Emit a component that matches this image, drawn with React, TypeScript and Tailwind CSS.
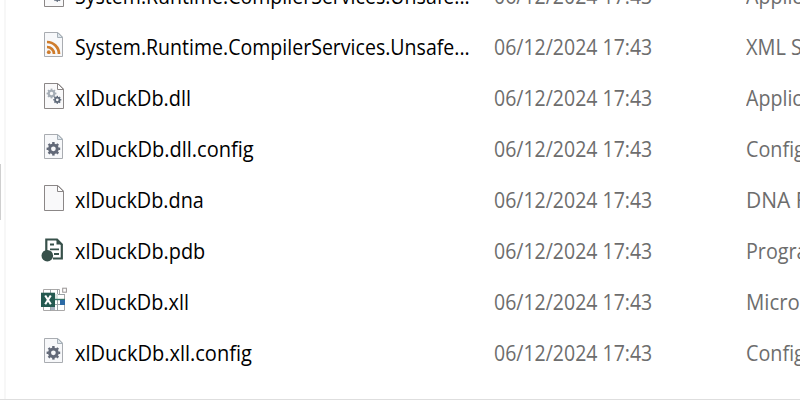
import type { ReactNode } from "react";

type Kind = "dll" | "rss" | "config" | "blank" | "pdb" | "xll";

function Gear({ cx, cy, r, color }: { cx: number; cy: number; r: number; color: string }) {
  return (
    <g transform={`translate(${cx} ${cy})`} stroke={color} fill="none">
      <circle r={r * 0.57} strokeWidth={r * 0.44} />
      {[0, 45, 90, 135, 180, 225, 270, 315].map((a) => (
        <path key={a} d={`M0 ${-r * 0.7}V${-r}`} strokeWidth={r * 0.36} transform={`rotate(${a})`} />
      ))}
    </g>
  );
}

function SmallPage() {
  return (
    <>
      <path d="M4.5 1.5H18L22.5 6V25.5H4.5Z" fill="#f7f8fa" stroke="#a9acb1" />
      <path d="M17.5 1.5V6.5H22.5Z" fill="#dfe6ec" stroke="#a6b0b8" />
    </>
  );
}

function LargePage() {
  return (
    <>
      <path d="M4.5 1.5H18L23.5 7V26.5H4.5Z" fill="#f9f9fa" stroke="#8b8787" />
      <path d="M17.5 1.5V7.5H23.5Z" fill="#ffffff" stroke="#8b8787" />
    </>
  );
}

const art: Record<Kind, ReactNode> = {
  dll: (
    <>
      <LargePage />
      <Gear cx={11.5} cy={11.5} r={4.9} color="#a5adb6" />
      <Gear cx={17.3} cy={17.8} r={4} color="#5e6979" />
    </>
  ),
  rss: (
    <>
      <SmallPage />
      <g fill="none" stroke="#cf7c2c" strokeWidth="2.7">
        <path d="M7 11A12 12 0 0 1 19 23" />
        <path d="M7 16A7 7 0 0 1 14 23" />
      </g>
      <circle cx="8.8" cy="21.2" r="1.9" fill="#cf7c2c" />
    </>
  ),
  config: (
    <>
      <SmallPage />
      <Gear cx={13.4} cy={15.8} r={6.8} color="#626978" />
    </>
  ),
  blank: <LargePage />,
  pdb: (
    <>
      <path d="M6.3 16V4.5H17L21.8 9.5V23.5H13" fill="none" stroke="#37504a" strokeWidth="2.2" />
      <path d="M16.5 4V9.5H22.5Z" fill="#37504a" />
      <path d="M10 9.5H14M10 14.3H19M14 19H19" stroke="#37504a" strokeWidth="1.8" />
      <circle cx="7.3" cy="20.7" r="5.8" fill="#37504a" />
    </>
  ),
  xll: (
    <>
      <path d="M3.5 3.5H19.5V8.5H24.5V24.5H3.5Z" fill="#fff" stroke="#aaa8a8" />
      <path d="M10.5 3V8M17.5 3V25M10.5 20V25M15 8.5H25M15 13.5H25M15 18.5H25" stroke="#9ba3a7" fill="none" />
      <path d="M14 8H18V14H14Z" fill="#dce5e2" />
      <path d="M15 13.5H25" stroke="#347568" strokeWidth="1.4" />
      <path d="M20 14H25V19H20Z" fill="#2c6aa5" />
      <path d="M11 21H15V24H11Z" fill="#a9b3c1" />
      <rect x="1" y="6.7" width="14" height="14.3" fill="#245950" />
      <path d="M5.2 9.5L10.8 18.2M10.8 9.5L5.2 18.2" stroke="#fff" strokeWidth="2.1" />
      <rect x="22.7" y="2.2" width="3.7" height="4" fill="#fff" stroke="#999595" />
    </>
  ),
};

interface Row {
  kind: Kind;
  name: string;
  nameFit: string;
  type: string;
  typeFit: string;
}

const rows: Row[] = [
  { kind: "dll", name: "System.Runtime.CompilerServices.Unsafe...", nameFit: "scale-x-[0.931]", type: "Application extension", typeFit: "scale-x-[0.935]" },
  { kind: "rss", name: "System.Runtime.CompilerServices.Unsafe...", nameFit: "scale-x-[0.931]", type: "XML Source File", typeFit: "scale-x-[0.95]" },
  { kind: "dll", name: "xlDuckDb.dll", nameFit: "scale-x-[0.946]", type: "Application extension", typeFit: "scale-x-[0.935]" },
  { kind: "config", name: "xlDuckDb.dll.config", nameFit: "scale-x-[0.953]", type: "Configuration Source File", typeFit: "scale-x-[0.94]" },
  { kind: "blank", name: "xlDuckDb.dna", nameFit: "scale-x-[0.944]", type: "DNA File", typeFit: "scale-x-[1]" },
  { kind: "pdb", name: "xlDuckDb.pdb", nameFit: "scale-x-[0.946]", type: "Program Debug Database", typeFit: "scale-x-[0.94]" },
  { kind: "xll", name: "xlDuckDb.xll", nameFit: "scale-x-[0.944]", type: "Microsoft Excel Add-in", typeFit: "scale-x-[0.97]" },
  { kind: "config", name: "xlDuckDb.xll.config", nameFit: "scale-x-[0.953]", type: "Configuration Source File", typeFit: "scale-x-[0.94]" },
];

export default function App() {
  return (
    <div className="flex h-[400px] w-[800px] overflow-hidden bg-white font-['Open_Sans','Noto_Sans',sans-serif] text-[21px]">
      <div className="flex w-1 shrink-0 flex-col pt-[164px]">
        <div className="h-[56px] w-px bg-[#cfcfcf]" />
      </div>
      <div className="h-[399px] w-[2px] shrink-0 bg-[#f7f7f7]" />
      <div className="-ml-1.5 h-[400px] w-[800px] shrink-0 overflow-hidden border-b border-[#dedede]">
        <div className="-mt-7 flex flex-col">
          {rows.map((row, i) => (
            <div key={i} className="flex h-[51px] items-start whitespace-nowrap pl-10 leading-[48px]">
              <svg className="mt-2 h-[30px] w-7 shrink-0" viewBox="0 0 28 30">
                {art[row.kind]}
              </svg>
              <div className="w-[419px] shrink-0 pl-[7px] text-black">
                <span className={`inline-block origin-left ${row.nameFit}`}>{row.name}</span>
              </div>
              <div className="w-[252px] shrink-0 pl-[7px] text-[#6d6d6d]">
                <span className="inline-block origin-left scale-x-[0.928]">06/12/2024 17:43</span>
              </div>
              <div className="w-[61px] shrink-0 overflow-hidden pl-[7px] text-[#6d6d6d]">
                <span className={`inline-block origin-left ${row.typeFit}`}>{row.type}</span>
              </div>
            </div>
          ))}
        </div>
      </div>
    </div>
  );
}
